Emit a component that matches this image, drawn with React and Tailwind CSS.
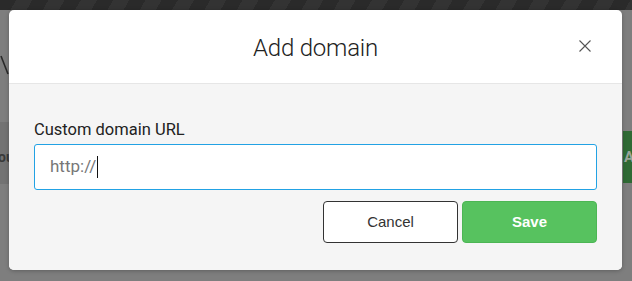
export default function App() {
  return (
    <div className="relative h-[281px] w-[632px] overflow-hidden bg-[#7e7e7e] font-['Roboto',sans-serif]">
      {/* page behind the overlay */}
      <div className="h-[10px] bg-[#2a2a2a] bg-[repeating-linear-gradient(120deg,#2a2a2a_0px,#2a2a2a_14px,#333333_14px,#333333_28px)]" />
      <div className="absolute left-0 top-[122px] h-[62px] w-[12px] bg-[#737373]">
        <span className="absolute left-[-2px] top-[25px] text-[14px] font-bold text-[#3a3a3a]">ou</span>
      </div>
      <svg className="absolute left-0 top-[50px]" width="10" height="30" viewBox="0 0 10 30">
        <path d="M1 6 L8 24" stroke="#2a2a2a" strokeWidth="1.6" />
      </svg>
      <div className="absolute left-[623px] top-[131px] flex h-[52px] w-[20px] items-center bg-[#2f6a34] pl-[1px] text-[15px] font-bold text-[#9aa59a]">
        A
      </div>

      {/* modal */}
      <div className="absolute left-[9px] top-[10px] flex h-[260px] w-[613px] flex-col overflow-hidden rounded-[5px] bg-white shadow-[0_1px_4px_rgba(0,0,0,0.25)]">
        <div className="relative flex h-[74px] shrink-0 items-center justify-center border-b border-[#e6e6e6]">
          <h1 className="pt-[2px] text-[24px] font-light tracking-[-0.2px] text-[#222]">Add domain</h1>
          <button className="absolute right-[31px] top-[30px] p-0">
            <svg width="12" height="12" viewBox="0 0 12 12">
              <path d="M0.5 0.5 L11.5 11.5 M11.5 0.5 L0.5 11.5" stroke="#555" strokeWidth="1.1" />
            </svg>
          </button>
        </div>
        <div className="flex flex-1 flex-col bg-[#f5f5f5] px-[25px] pt-[36px]">
          <label className="mb-[4px] block text-[16.5px] leading-[20px] text-[#222]">Custom domain URL</label>
          <div className="flex h-[46px] items-center rounded-[3px] border border-[#22a2e4] bg-white pl-[15px] text-[17px] text-[#777]">
            <span>http://</span>
            <span className="ml-[1px] h-[22px] w-px bg-[#111]" />
          </div>
          <div className="mt-[11px] flex justify-end gap-[4px] font-['Liberation_Sans',sans-serif]">
            <button className="h-[42px] w-[135px] rounded-[4px] border border-[#333] bg-white text-[15px] text-[#333]">
              Cancel
            </button>
            <button className="h-[42px] w-[135px] rounded-[4px] border border-[#4cb654] bg-[#57c25f] text-[15px] font-bold text-white">
              Save
            </button>
          </div>
        </div>
      </div>
    </div>
  );
}
